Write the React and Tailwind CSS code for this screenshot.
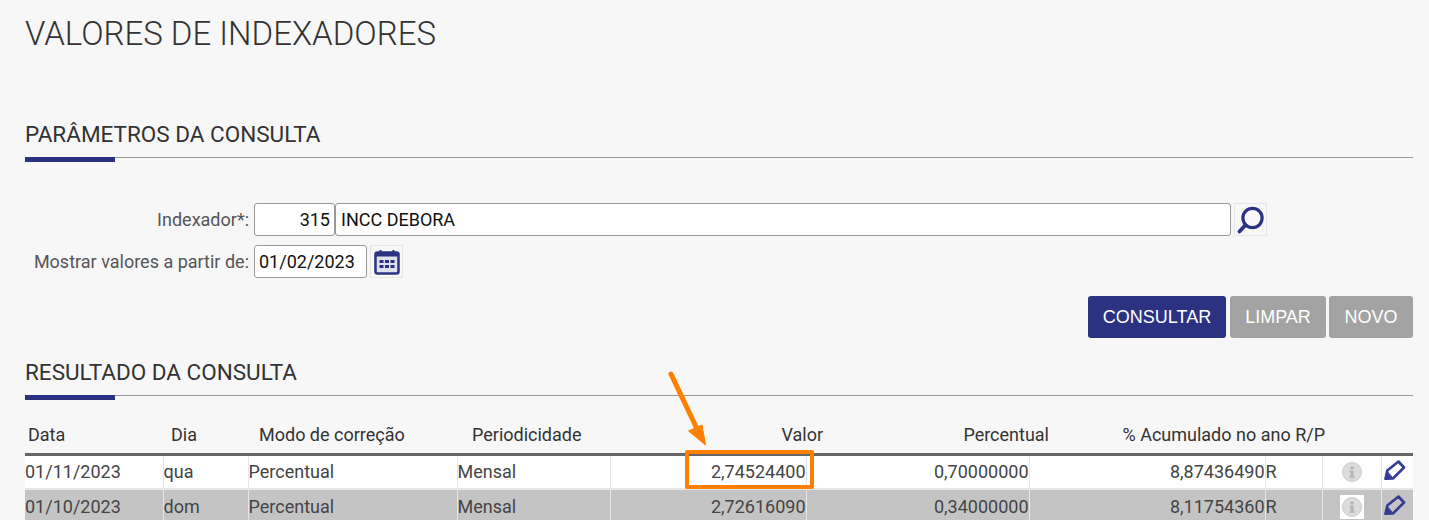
import React from "react";

const rows = [
  { data: "01/11/2023", dia: "qua", modo: "Percentual", per: "Mensal", valor: "2,74524400", pct: "0,70000000", acum: "8,87436490", rp: "R" },
  { data: "01/10/2023", dia: "dom", modo: "Percentual", per: "Mensal", valor: "2,72616090", pct: "0,34000000", acum: "8,11754360", rp: "R" },
];

function SectionTitle({ children }) {
  return (
    <div className="border-b border-[#999999] relative h-[36px]">
      <h2 className="text-[22.5px] leading-[25px] text-[#333333]">{children}</h2>
      <div className="absolute left-0 top-[35px] w-[90px] h-[5px] bg-[#2b3282]" />
    </div>
  );
}

function IconBox({ children }) {
  return (
    <div className="w-[33px] h-[33px] border border-[#e6e6e6] flex items-center justify-center shrink-0">
      {children}
    </div>
  );
}

function SearchIcon() {
  return (
    <svg width="30" height="30" viewBox="0 0 30 30" fill="none" stroke="#2b3282">
      <circle cx="16.5" cy="13" r="9.6" strokeWidth="3.2" />
      <path d="M9.5 20 L3.5 26.5" strokeWidth="3.8" strokeLinecap="round" />
    </svg>
  );
}

function CalendarIcon() {
  return (
    <svg width="26" height="28" viewBox="0 0 26 28" fill="none">
      <rect x="1.5" y="4.5" width="23" height="21" rx="2" fill="#dfe0ee" stroke="#2b3282" strokeWidth="2.5" />
      <rect x="1.5" y="4.5" width="23" height="4" fill="#2b3282" />
      <path d="M6.5 2v4M19.5 2v4" stroke="#2b3282" strokeWidth="2" />
      <path d="M5.5 12h4v3h-4zM11 12h4v3h-4zM16.5 12h4v3h-4zM5.5 17h4v3h-4zM11 17h4v3h-4zM16.5 17h4v3h-4z" fill="#2b3282" />
    </svg>
  );
}

function InfoIcon() {
  return (
    <svg width="20" height="20" viewBox="0 0 20 20">
      <circle cx="10" cy="10" r="9.5" fill="#dcdcdc" stroke="#cacaca" />
      <circle cx="10" cy="6" r="1.8" fill="#b4b4b4" />
      <path d="M7.5 8.8h4v5.6h1.2v1.4H7.3v-1.4h1.2v-4.2h-1z" fill="#b4b4b4" />
    </svg>
  );
}

function EditIcon() {
  return (
    <svg width="24" height="24" viewBox="0 0 24 24" fill="none" stroke="#343c94">
      <path d="M15.5 3.5 L21 9.5 L10 20.5 L2.5 20.8 L4.3 12.5 Z" strokeWidth="2.6" strokeLinejoin="round" />
      <path d="M4.3 13.5 L9.5 19.5 L2 21.5 Z" fill="#343c94" strokeWidth="1" />
    </svg>
  );
}

export default function App() {
  return (
    <div className="relative w-[1429px] h-[520px] overflow-hidden bg-[#f7f7f7] pl-[25px] pr-[16px] text-[#444444] font-['Roboto',sans-serif]">
      <h1 className="pt-[14px] text-[33px] leading-[40px] font-light text-[#333333]">VALORES DE INDEXADORES</h1>

      <div className="mt-[68px]">
        <SectionTitle>PARÂMETROS DA CONSULTA</SectionTitle>
      </div>

      <div className="mt-[45px] flex flex-col gap-[9px] text-[18px]">
        <div className="flex items-center h-[33px]">
          <label className="w-[229px] text-right pr-[5px] text-[#555555]">Indexador*:</label>
          <input readOnly value="315" className="w-[81px] h-[33px] bg-white border border-[#999999] rounded-[3px] px-[4px] text-right text-[#111111] outline-none" />
          <input readOnly value="INCC DEBORA" className="w-[896px] h-[33px] bg-white border border-[#999999] rounded-[3px] px-[5px] text-[#111111] outline-none" />
          <div className="ml-[3px]"><IconBox><SearchIcon /></IconBox></div>
        </div>
        <div className="flex items-center h-[33px]">
          <label className="w-[229px] text-right pr-[5px] text-[#555555] whitespace-nowrap">Mostrar valores a partir de:</label>
          <input readOnly value="01/02/2023" className="w-[113px] h-[33px] bg-white border border-[#999999] rounded-[3px] px-[4px] text-[#111111] outline-none" />
          <div className="ml-[3px]"><IconBox><CalendarIcon /></IconBox></div>
        </div>
      </div>

      <div className="mt-[18px] flex justify-end gap-[3px] text-[18px]">
        <button className="w-[138px] h-[42px] rounded-[3px] bg-[#2b3282] text-white mr-[1px] font-['Liberation_Sans',sans-serif]">CONSULTAR</button>
        <button className="w-[96px] h-[42px] rounded-[3px] bg-[#a3a3a3] text-white font-['Liberation_Sans',sans-serif]">LIMPAR</button>
        <button className="w-[84px] h-[42px] rounded-[3px] bg-[#a3a3a3] text-white font-['Liberation_Sans',sans-serif]">NOVO</button>
      </div>

      <div className="mt-[22px]">
        <SectionTitle>RESULTADO DA CONSULTA</SectionTitle>
      </div>

      <table className="mt-[20px] w-[1388px] table-fixed border-collapse text-[18px]">
        <colgroup>
          <col className="w-[138px]" />
          <col className="w-[85px]" />
          <col className="w-[209px]" />
          <col className="w-[153px]" />
          <col className="w-[196px]" />
          <col className="w-[223px]" />
          <col className="w-[236px]" />
          <col className="w-[57px]" />
          <col className="w-[59px]" />
          <col className="w-[32px]" />
        </colgroup>
        <thead>
          <tr className="h-[38px] border-b-[3px] border-[#666666] text-[#333333]">
            <th className="font-normal text-left pl-[3px]">Data</th>
            <th className="font-normal text-left pl-[8px]">Dia</th>
            <th className="font-normal text-left pl-[11px]">Modo de correção</th>
            <th className="font-normal text-left pl-[15px]">Periodicidade</th>
            <th className="font-normal text-right"><span className="relative left-[17px]">Valor</span></th>
            <th className="font-normal text-right"><span className="relative left-[20px]">Percentual</span></th>
            <th className="font-normal text-right whitespace-nowrap" colSpan={2}><span className="relative left-[3px]">% Acumulado no ano R/P</span></th>
            <th />
            <th />
          </tr>
        </thead>
        <tbody>
          {rows.map((r, i) => (
            <tr key={r.data} className={i === 0 ? "h-[35px] bg-white" : "h-[35px] bg-[#c4c4c4]"}>
              <td className="border-r border-b-[2px] border-[#e6e6e6]">{r.data}</td>
              <td className="border-r border-b-[2px] border-[#e6e6e6]">{r.dia}</td>
              <td className="border-r border-b-[2px] border-[#e6e6e6]">{r.modo}</td>
              <td className="border-r border-b-[2px] border-[#e6e6e6]">{r.per}</td>
              <td className="border-r border-b-[2px] border-[#e6e6e6] text-right">{r.valor}</td>
              <td className="border-r border-b-[2px] border-[#e6e6e6] text-right">{r.pct}</td>
              <td className="border-r border-b-[2px] border-[#e6e6e6] text-right">{r.acum}</td>
              <td className="border-r border-b-[2px] border-[#e6e6e6]">{r.rp}</td>
              <td className="border-r border-b-[2px] border-[#e6e6e6]">
                <div className={i === 0 ? "w-[24px] h-[24px] mx-auto flex items-center justify-center" : "w-[24px] h-[24px] mx-auto flex items-center justify-center bg-white"}>
                  <InfoIcon />
                </div>
              </td>
              <td className="border-b-[2px] border-[#e6e6e6]">
                <div className="flex justify-center pr-[4px] pb-[4px]"><EditIcon /></div>
              </td>
            </tr>
          ))}
        </tbody>
      </table>

      {/* destaque laranja por cima da tabela */}
      <div className="absolute left-[685px] top-[450px] w-[129px] h-[39px] border-[4px] border-[#ff8000] rounded-[2px]" />
      <svg className="absolute left-[660px] top-[365px]" width="60" height="90" viewBox="0 0 60 90" fill="none">
        <path d="M11 9 L38 66" stroke="#ff8000" strokeWidth="5" strokeLinecap="round" />
        <path d="M45.5 80 L28.5 66 L42 60 Z" fill="#ff8000" stroke="#ff8000" strokeWidth="1" />
      </svg>
    </div>
  );
}
